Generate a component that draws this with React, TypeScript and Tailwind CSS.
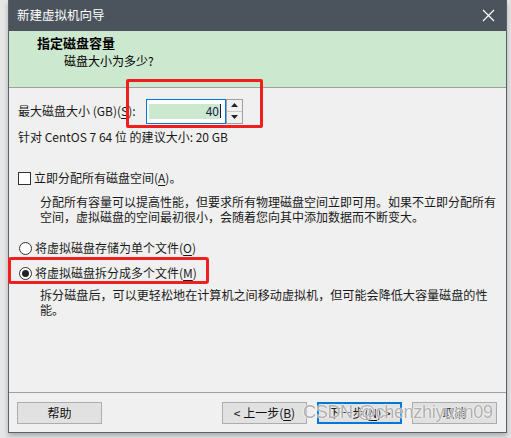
import React from "react";

const FONT = '"Microsoft YaHei", "Noto Sans CJK SC", "Noto Sans", sans-serif';

function Key({ k }: { k: string }) {
  return <span className="underline underline-offset-2">{k}</span>;
}

function Btn({ label, primary }: { label: React.ReactNode; primary?: boolean }) {
  return (
    <div
      className={`flex h-[22px] w-[85px] items-center justify-center bg-[#e1e1e1] text-[12px] text-[#111] ${
        primary ? "border-2 border-[#0078d7]" : "border border-[#adadad]"
      }`}
    >
      {label}
    </div>
  );
}

export default function App() {
  return (
    <div
      className="relative h-[438px] w-[511px] overflow-hidden bg-[#e6e6e6]"
      style={{ fontFamily: FONT }}
    >
      {/* dialog window */}
      <div className="ml-[8px] flex h-[433px] w-[499px] flex-col border-x border-b border-[#5a6168] bg-[#f0f0f0] shadow-[0_3px_5px_rgba(0,0,0,0.25)]">
        <div className="flex h-[31px] shrink-0 items-center justify-between bg-[#4b545c] pl-[8px] pr-[11px]">
          <span className="text-[12.5px] leading-none text-white">新建虚拟机向导</span>
          <svg width="13" height="13" viewBox="0 0 13 13">
            <path d="M1 1 L12 12 M12 1 L1 12" stroke="#fff" strokeWidth="1.2" />
          </svg>
        </div>

        <div className="h-[57px] shrink-0 border-b border-[#a0a0a0] bg-[#cce8cf] pl-[28px] pt-[4px]">
          <div className="text-[13px] font-bold leading-[16px] text-black">指定磁盘容量</div>
          <div className="mt-[2px] pl-[27px] text-[12px] leading-[16px] text-black">磁盘大小为多少?</div>
        </div>

        <div className="flex-1 px-[9px] text-[12px] text-[#1a1a1a]">
          <div className="mt-[10px] flex h-[26px] items-center">
            <span className="w-[128px] leading-[16px]">
              最大磁盘大小 (GB)(<Key k="S" />):
            </span>
            <div className="flex h-[25px] w-[80px] items-center border border-[#0078d7] bg-white pl-[2px] pr-[4px]">
              <div className="flex h-[15px] flex-1 items-center justify-end bg-[#cce8cf] pr-[1px] text-[#1b1b4a]">
                40
              </div>
              <div className="h-[14px] w-px bg-[#1b1b4a]" />
            </div>
            <div className="flex h-[25px] w-[17px] flex-col border border-[#a0a0a0] bg-[#f0f0f0]">
              <div className="flex flex-1 items-center justify-center border-b border-[#c8c8c8]">
                <svg width="7" height="4" viewBox="0 0 7 4">
                  <path d="M0 4 L3.5 0 L7 4 Z" fill="#222" />
                </svg>
              </div>
              <div className="flex flex-1 items-center justify-center">
                <svg width="7" height="4" viewBox="0 0 7 4">
                  <path d="M0 0 L7 0 L3.5 4 Z" fill="#222" />
                </svg>
              </div>
            </div>
          </div>

          <div className="mt-[5px] leading-[16px]">针对 CentOS 7 64 位 的建议大小: 20 GB</div>

          <div className="mt-[25px] flex items-center leading-[16px]">
            <div className="mr-[3px] h-[13px] w-[13px] border border-[#333] bg-white" />
            <span>
              立即分配所有磁盘空间(<Key k="A" />)。
            </span>
          </div>
          <div className="mt-[8px] whitespace-nowrap pl-[22px] text-[12px] leading-[15px]">
            分配所有容量可以提高性能，但要求所有物理磁盘空间立即可用。如果不立即分配所有
            <br />
            空间，虚拟磁盘的空间最初很小，会随着您向其中添加数据而不断变大。
          </div>

          <div className="mt-[16px] flex items-center leading-[16px]">
            <div className="mr-[3px] ml-[1px] h-[13px] w-[13px] rounded-full border border-[#333] bg-white" />
            <span>
              将虚拟磁盘存储为单个文件(<Key k="O" />)
            </span>
          </div>
          <div className="mt-[9px] flex items-center leading-[16px]">
            <div className="mr-[3px] ml-[1px] flex h-[13px] w-[13px] items-center justify-center rounded-full border border-[#333] bg-white">
              <div className="h-[7px] w-[7px] rounded-full bg-[#222]" />
            </div>
            <span>
              将虚拟磁盘拆分成多个文件(<Key k="M" />)
            </span>
          </div>
          <div className="mt-[6px] whitespace-nowrap pl-[22px] text-[12.1px] leading-[15px]">
            拆分磁盘后，可以更轻松地在计算机之间移动虚拟机，但可能会降低大容量磁盘的性
            <br />
            能。
          </div>
        </div>

        <div className="h-px shrink-0 bg-[#a0a0a0]" />
        <div className="flex h-[39px] shrink-0 items-start justify-between pl-[8px] pr-[9px] pt-[9px]">
          <Btn label="帮助" />
          <div className="flex gap-[10px]">
            <Btn label={<>&lt; 上一步(<Key k="B" />)</>} />
            <Btn primary label={<>下一步(<Key k="N" />) &gt;</>} />
            <Btn label="取消" />
          </div>
        </div>
      </div>

      {/* red annotation boxes */}
      <div className="pointer-events-none absolute left-[126px] top-[79px] h-[49px] w-[137px] rounded-[2px] border-[3px] border-[#f01e1e]" />
      <div className="pointer-events-none absolute left-[8px] top-[257px] h-[27px] w-[201px] rounded-[3px] border-[3px] border-[#f01e1e]" />

      {/* watermark */}
      <div
        className="pointer-events-none absolute left-[303px] top-[401px] whitespace-nowrap text-[18px] leading-[22px] tracking-[-0.3px] text-[#9a9a9a]/80"
        style={{ fontFamily: '"Liberation Sans", Arial, sans-serif', textShadow: "0 0 2px #fff, 0 0 1px #fff" }}
      >
        CSDN @chenzhiyuan09
      </div>
    </div>
  );
}
